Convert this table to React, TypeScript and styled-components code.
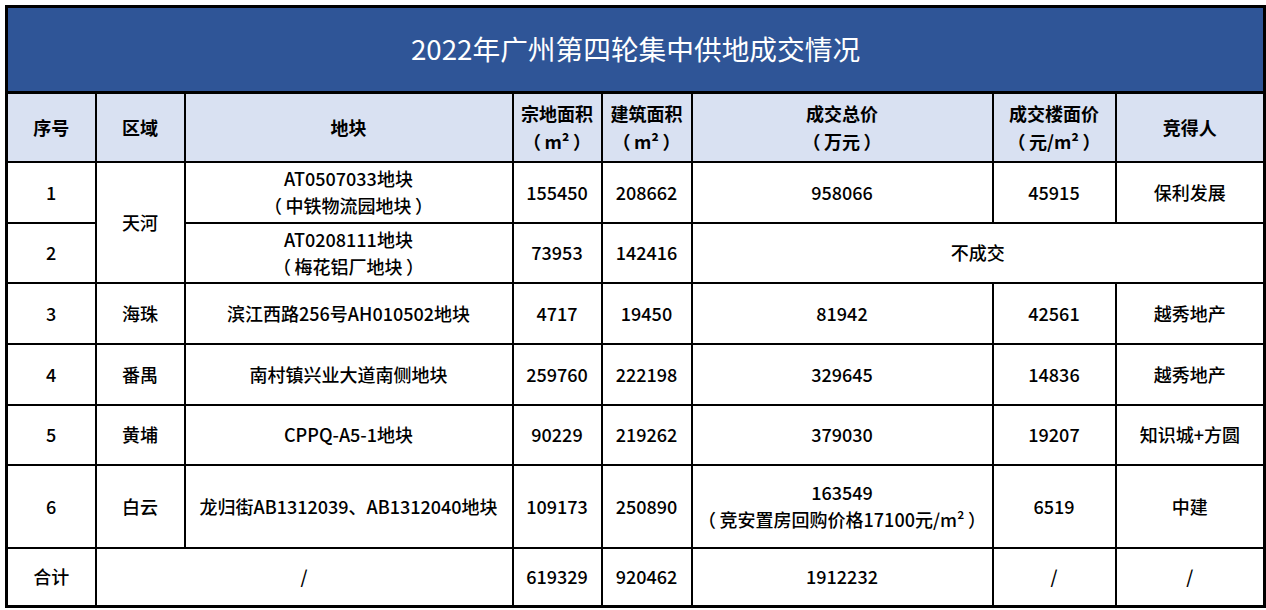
import React from "react";
import styled, { createGlobalStyle } from "styled-components";

const Global = createGlobalStyle`
  html, body { margin: 0; padding: 0; background: #ffffff; }
  body { font-family: "Noto Sans CJK SC", "Noto Sans", sans-serif; }
`;

const Page = styled.div`
  padding: 5px 0 0 5px;
  width: 1266px;
  height: 610px;
  box-sizing: border-box;
  overflow: hidden;
`;

const Sheet = styled.table`
  border-collapse: collapse;
  table-layout: fixed;
  width: 1258px;
  border: 3px solid #000;
  color: #000;
  font-family: "Noto Sans CJK SC", "Noto Sans", sans-serif;
  font-size: 18px;
  line-height: 27px;
  font-weight: 500;
  text-spacing-trim: space-all;
`;

const Row = styled.tr<{ $h: number }>`
  height: ${(p) => p.$h}px;
`;

const TitleCell = styled.th`
  background: #2f5597;
  color: #ffffff;
  font-size: 27.7px;
  font-weight: 400;
  border: 3px solid #000;
  padding: 0 0 2px;
  text-align: center;
  vertical-align: middle;
`;

const HeadCell = styled.th`
  background: #d9e1f2;
  border: 2.5px solid #000;
  padding: 0;
  font-weight: 700;
  text-align: center;
  vertical-align: middle;
  line-height: 28px;
`;

const Cell = styled.td`
  border: 2.5px solid #000;
  padding: 0;
  text-align: center;
  vertical-align: middle;
  background: #ffffff;
`;

const Line = styled.div`
  white-space: nowrap;
`;

const widths = [89, 89, 328, 89, 90, 301, 123, 149];

const paren = (s: string) => `（\u2009${s}\u2009）`;

type DataRow = {
  no: string;
  area?: string;
  areaSpan?: number;
  plot: string[];
  land: string;
  build: string;
  total?: string[];
  unit?: string;
  winner?: string;
  failed?: string;
  h: number;
};

const rows: DataRow[] = [
  {
    no: "1",
    area: "天河",
    areaSpan: 2,
    plot: ["AT0507033地块", paren("中铁物流园地块")],
    land: "155450",
    build: "208662",
    total: ["958066"],
    unit: "45915",
    winner: "保利发展",
    h: 61,
  },
  {
    no: "2",
    plot: ["AT0208111地块", paren("梅花铝厂地块")],
    land: "73953",
    build: "142416",
    failed: "不成交",
    h: 60,
  },
  {
    no: "3",
    area: "海珠",
    plot: ["滨江西路256号AH010502地块"],
    land: "4717",
    build: "19450",
    total: ["81942"],
    unit: "42561",
    winner: "越秀地产",
    h: 61,
  },
  {
    no: "4",
    area: "番禺",
    plot: ["南村镇兴业大道南侧地块"],
    land: "259760",
    build: "222198",
    total: ["329645"],
    unit: "14836",
    winner: "越秀地产",
    h: 61,
  },
  {
    no: "5",
    area: "黄埔",
    plot: ["CPPQ-A5-1地块"],
    land: "90229",
    build: "219262",
    total: ["379030"],
    unit: "19207",
    winner: "知识城+方圆",
    h: 60,
  },
  {
    no: "6",
    area: "白云",
    plot: ["龙归街AB1312039、AB1312040地块"],
    land: "109173",
    build: "250890",
    total: ["163549", paren("竞安置房回购价格17100元/m²")],
    unit: "6519",
    winner: "中建",
    h: 83,
  },
];

const Lines = ({ items }: { items: string[] }) => (
  <>
    {items.map((t, i) => (
      <Line key={i}>{t}</Line>
    ))}
  </>
);

export default function App() {
  return (
    <>
      <Global />
      <Page>
        <Sheet>
          <colgroup>
            {widths.map((w, i) => (
              <col key={i} style={{ width: w }} />
            ))}
          </colgroup>
          <thead>
            <Row $h={86}>
              <TitleCell colSpan={8}>2022年广州第四轮集中供地成交情况</TitleCell>
            </Row>
            <Row $h={69}>
              <HeadCell>序号</HeadCell>
              <HeadCell>区域</HeadCell>
              <HeadCell>地块</HeadCell>
              <HeadCell>
                <Lines items={["宗地面积", paren("m²")]} />
              </HeadCell>
              <HeadCell>
                <Lines items={["建筑面积", paren("m²")]} />
              </HeadCell>
              <HeadCell>
                <Lines items={["成交总价", paren("万元")]} />
              </HeadCell>
              <HeadCell>
                <Lines items={["成交楼面价", paren("元/m²")]} />
              </HeadCell>
              <HeadCell>竞得人</HeadCell>
            </Row>
          </thead>
          <tbody>
            {rows.map((r) => (
              <Row $h={r.h} key={r.no}>
                <Cell>{r.no}</Cell>
                {r.area && <Cell rowSpan={r.areaSpan}>{r.area}</Cell>}
                <Cell>
                  <Lines items={r.plot} />
                </Cell>
                <Cell>{r.land}</Cell>
                <Cell>{r.build}</Cell>
                {r.failed ? (
                  <Cell colSpan={3}>{r.failed}</Cell>
                ) : (
                  <>
                    <Cell>
                      <Lines items={r.total || []} />
                    </Cell>
                    <Cell>{r.unit}</Cell>
                    <Cell>{r.winner}</Cell>
                  </>
                )}
              </Row>
            ))}
            <Row $h={59}>
              <Cell>合计</Cell>
              <Cell colSpan={2}>/</Cell>
              <Cell>619329</Cell>
              <Cell>920462</Cell>
              <Cell>1912232</Cell>
              <Cell>/</Cell>
              <Cell>/</Cell>
            </Row>
          </tbody>
        </Sheet>
      </Page>
    </>
  );
}
